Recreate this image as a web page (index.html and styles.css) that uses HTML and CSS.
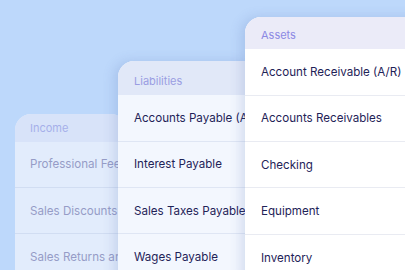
FILE: index.html
```html
<!DOCTYPE html>
<html>
<head>
<meta charset="utf-8">
<link rel="stylesheet" href="styles.css">
</head>
<body>
<div class="stack">
  <section class="card card-income">
    <div class="card-head">Income</div>
    <div class="row">Professional Fees</div>
    <div class="row">Sales Discounts</div>
    <div class="row">Sales Returns and Allowances</div>
  </section>
  <section class="card card-liab">
    <div class="card-head">Liabilities</div>
    <div class="row">Accounts Payable (A/P)</div>
    <div class="row">Interest Payable</div>
    <div class="row">Sales Taxes Payable</div>
    <div class="row">Wages Payable</div>
  </section>
  <section class="card card-assets">
    <div class="card-head">Assets</div>
    <div class="row">Account Receivable (A/R)</div>
    <div class="row">Accounts Receivables</div>
    <div class="row">Checking</div>
    <div class="row">Equipment</div>
    <div class="row">Inventory</div>
  </section>
</div>
</body>
</html>
```
FILE: styles.css
```css
html, body {
  margin: 0;
  padding: 0;
  width: 405px;
  height: 270px;
  overflow: hidden;
  background: #bdd8fb;
  font-family: Inter, "Noto Sans", sans-serif;
}
.stack {
  display: grid;
  grid-template-columns: 103px 127px 1fr;
  align-items: start;
  padding-left: 15px;
}
.card {
  border-radius: 16px 16px 0 0;
  overflow: hidden;
  box-shadow: -4px 0 12px rgba(70, 100, 170, 0.18);
}
.card-head {
  font-size: 11px;
  line-height: 14px;
  padding-left: 16px;
}
.row {
  height: 45.4px;
  border-bottom: 1px solid #e9ebf2;
  display: flex;
  align-items: center;
  padding-left: 16px;
  font-size: 11.6px;
  white-space: nowrap;
  overflow: hidden;
  color: #1f2358;
}
.card-assets {
  width: 260px;
  margin-top: 17px;
  background: #ffffff;
}
.card-assets .card-head {
  background: #ebebf8;
  color: #8b89e4;
  padding-top: 11px;
  padding-bottom: 7.3px;
}
.card-liab {
  width: 140px;
  margin-top: 61px;
  background: #f3f7fe;
}
.card-liab .card-head {
  background: #e1e8f8;
  color: #9a9de2;
  padding-top: 13px;
  padding-bottom: 7.3px;
}
.card-liab .row {
  border-bottom-color: #dfe6f4;
}
.card-income {
  width: 112px;
  margin-top: 114px;
  background: #e2ecfc;
  box-shadow: none;
}
.card-income .card-head {
  background: #d8e3f9;
  color: #a6b0ea;
  padding-top: 7px;
  padding-bottom: 6.7px;
  padding-left: 15px;
}
.card-income .row {
  color: #969cc7;
  border-bottom-color: #d1ddf2;
  padding-left: 15px;
}
```
